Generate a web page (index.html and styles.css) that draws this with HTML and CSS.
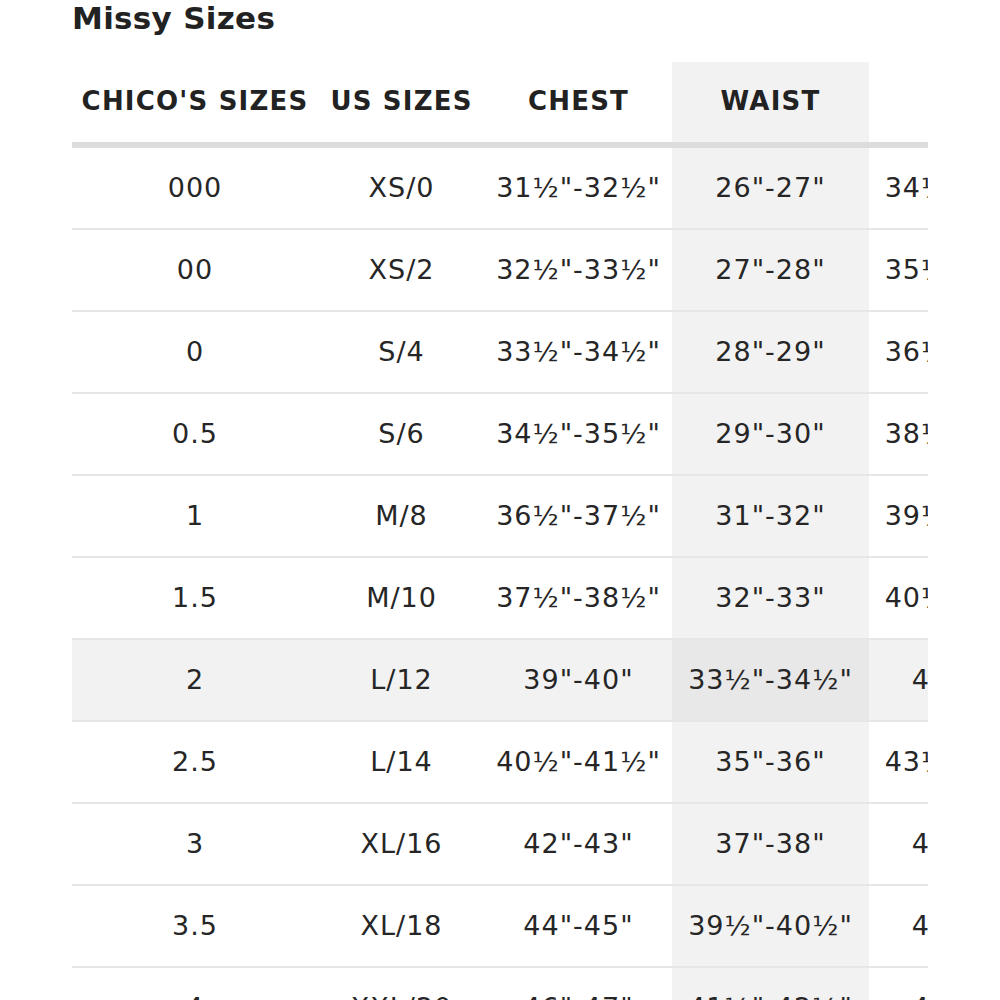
FILE: index.html
```html
<!DOCTYPE html>
<html>
<head>
<meta charset="utf-8">
<link rel="stylesheet" href="styles.css">
</head>
<body>
<h2 class="title">Missy Sizes</h2>
<div class="table-wrap">
<table class="size-table">
<colgroup>
<col class="c1"><col class="c2"><col class="c3"><col class="c4"><col class="c5">
</colgroup>
<thead>
<tr><th>CHICO'S SIZES</th><th>US SIZES</th><th>CHEST</th><th class="hl">WAIST</th><th>HIPS</th></tr>
</thead>
<tbody>
<tr><td>000</td><td>XS/0</td><td>31½"-32½"</td><td class="hl">26"-27"</td><td>34½"-35½"</td></tr>
<tr><td>00</td><td>XS/2</td><td>32½"-33½"</td><td class="hl">27"-28"</td><td>35½"-36½"</td></tr>
<tr><td>0</td><td>S/4</td><td>33½"-34½"</td><td class="hl">28"-29"</td><td>36½"-37½"</td></tr>
<tr><td>0.5</td><td>S/6</td><td>34½"-35½"</td><td class="hl">29"-30"</td><td>38½"-39½"</td></tr>
<tr><td>1</td><td>M/8</td><td>36½"-37½"</td><td class="hl">31"-32"</td><td>39½"-40½"</td></tr>
<tr><td>1.5</td><td>M/10</td><td>37½"-38½"</td><td class="hl">32"-33"</td><td>40½"-41½"</td></tr>
<tr class="active"><td>2</td><td>L/12</td><td>39"-40"</td><td class="hl">33½"-34½"</td><td>42"-43"</td></tr>
<tr><td>2.5</td><td>L/14</td><td>40½"-41½"</td><td class="hl">35"-36"</td><td>43½"-44½"</td></tr>
<tr><td>3</td><td>XL/16</td><td>42"-43"</td><td class="hl">37"-38"</td><td>45"-46"</td></tr>
<tr><td>3.5</td><td>XL/18</td><td>44"-45"</td><td class="hl">39½"-40½"</td><td>47"-48"</td></tr>
<tr><td>4</td><td>XXL/20</td><td>46"-47"</td><td class="hl">41½"-42½"</td><td>49"-50"</td></tr>
</tbody>
</table>
</div>
</body>
</html>
```
FILE: styles.css
```css
html, body {
  margin: 0;
  padding: 0;
  background: #ffffff;
}
body {
  font-family: "DejaVu Sans", "Open Sans", sans-serif;
  color: #222222;
  padding-left: 72px;
  height: 1000px;
  overflow: hidden;
}
.title {
  margin: 0;
  font-size: 31px;
  font-weight: 700;
  line-height: 36px;
  height: 62px;
  letter-spacing: 0.3px;
}
.table-wrap {
  width: 856px;
  overflow: hidden;
}
.size-table {
  border-collapse: collapse;
  table-layout: fixed;
  width: 993px;
}
.c1 { width: 246px; }
.c2 { width: 167px; }
.c3 { width: 187px; }
.c4 { width: 197px; }
.c5 { width: 196px; }
.size-table th {
  height: 77px;
  padding: 0 0 3px;
  font-size: 26px;
  font-weight: 700;
  letter-spacing: 1.2px;
  text-align: center;
  white-space: nowrap;
  border-bottom: 6px solid #dcdcdc;
}
.size-table td {
  height: 78px;
  padding: 0 0 2px;
  font-size: 27px;
  font-weight: 400;
  letter-spacing: 1px;
  text-align: center;
  white-space: nowrap;
  color: #262626;
  border-bottom: 2px solid #e6e6e6;
}
.size-table .hl {
  background: #f2f2f2;
}
.size-table .active td {
  background: #f2f2f2;
}
.size-table .active td.hl {
  background: #e8e8e8;
}
```
